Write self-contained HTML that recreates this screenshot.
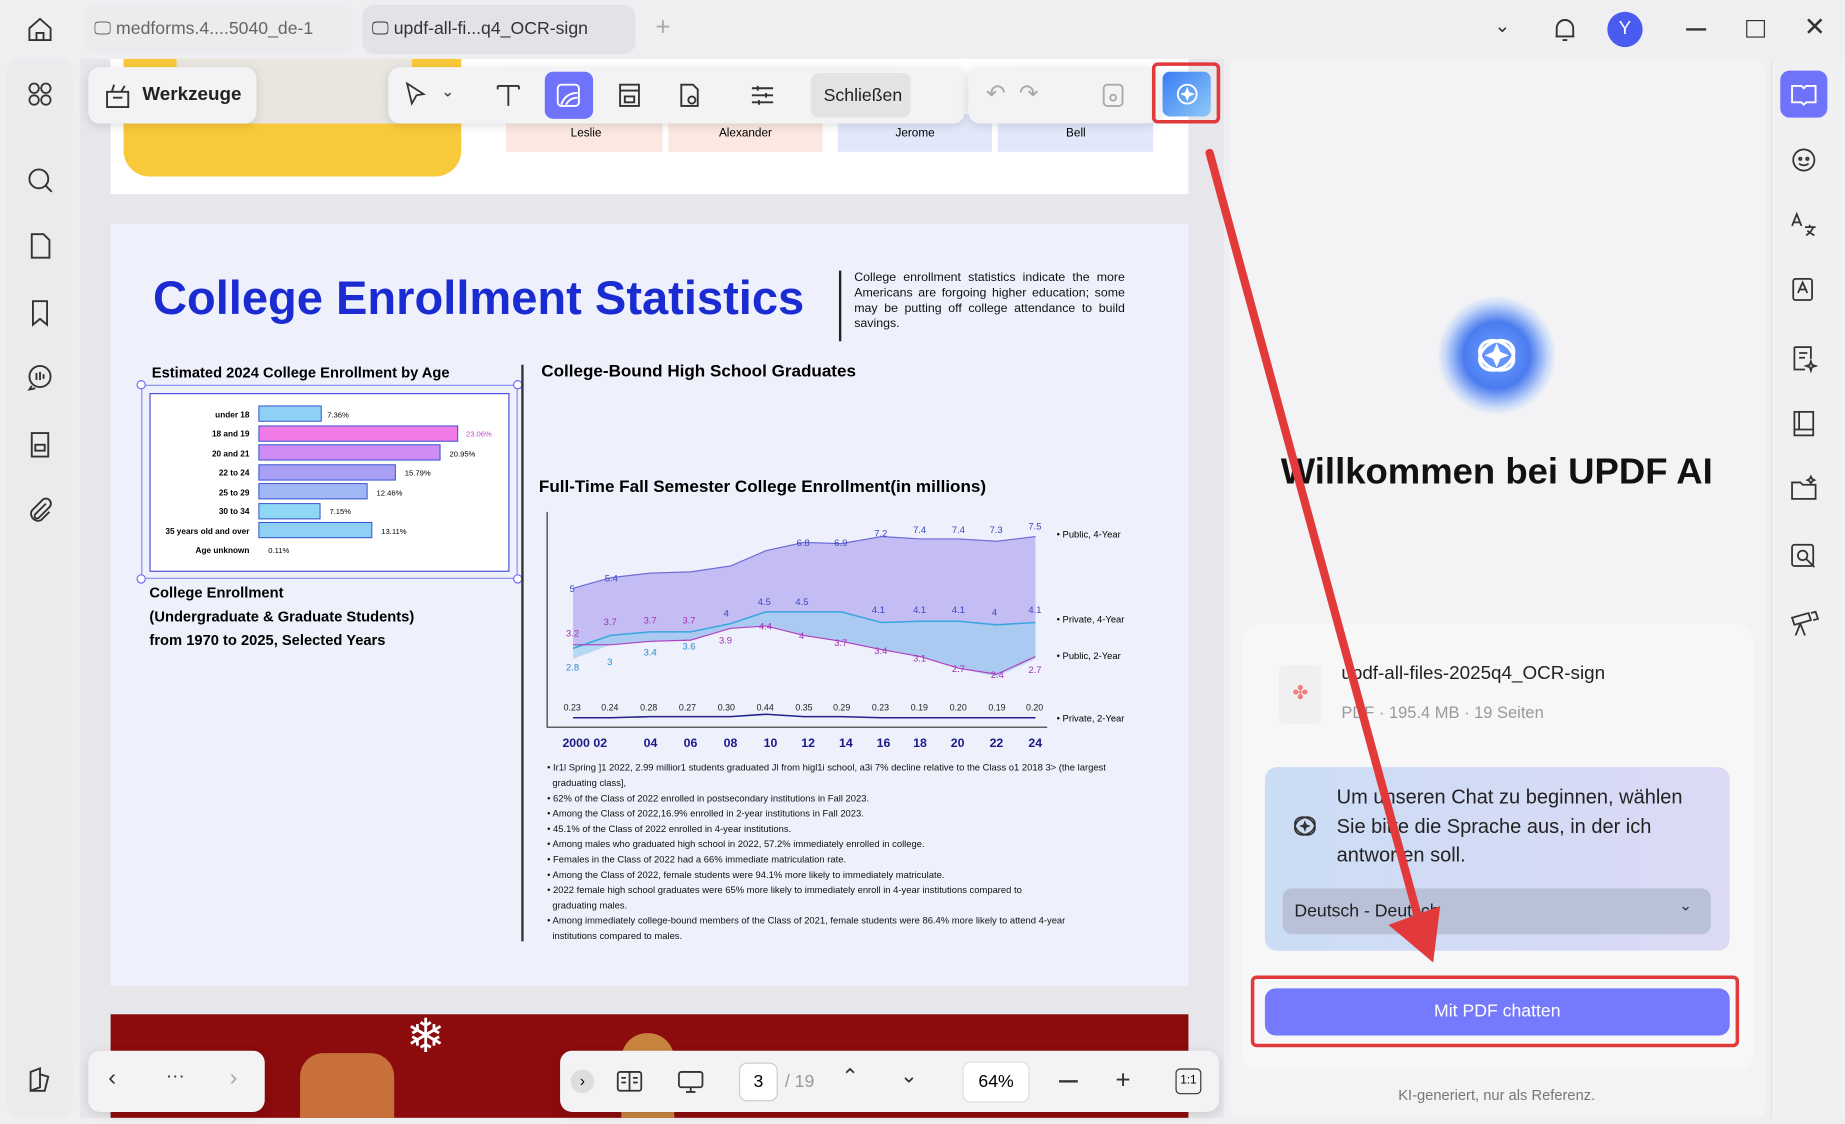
<!DOCTYPE html>
<html><head><meta charset="utf-8"><style>
*{margin:0;padding:0;box-sizing:border-box}
html,body{width:1845px;height:1124px;overflow:hidden;background:#f0f0f3;font-family:"Liberation Sans",sans-serif}
#c{position:absolute;left:0;top:0;width:1568px;height:955px;transform:scale(1.17666);transform-origin:0 0;background:#efeff2}
.a{position:absolute}
.ic{position:absolute;width:26px;height:26px;margin:-13px 0 0 -13px}
.tb{position:absolute;background:#f3f3f5;border-radius:10px;box-shadow:0 2px 8px rgba(0,0,0,.12)}
.t{position:absolute;white-space:nowrap}
</style></head><body><div id="c">
<!-- top bar -->
<svg class="ic" style="left:34px;top:25px" viewBox="0 0 26 26" fill="none" stroke="#333" stroke-width="1.6"><path d="M4 12 13 4l9 8v10H4z"/><path d="M10 22v-6h6v6"/></svg>
<div class="a" style="left:72px;top:4px;width:228px;height:42px;background:#ececef;border-radius:10px"></div>
<div class="t" style="left:80px;top:16px;font-size:15px;color:#666">🖵 medforms.4....5040_de-1</div>
<div class="a" style="left:308px;top:4px;width:232px;height:42px;background:#e3e3e7;border-radius:10px"></div>
<div class="t" style="left:316px;top:16px;font-size:15px;color:#333">🖵 updf-all-fi...q4_OCR-sign</div>
<div class="t" style="left:557px;top:10px;font-size:22px;color:#aaa">+</div>
<div class="t" style="left:1270px;top:12px;font-size:16px;color:#333">⌄</div>
<svg class="ic" style="left:1330px;top:25px" viewBox="0 0 26 26" fill="none" stroke="#333" stroke-width="1.6"><path d="M6 19V12a7 7 0 0 1 14 0v7H5h16M11 22h4"/></svg>
<div class="a" style="left:1366px;top:10px;width:30px;height:30px;border-radius:50%;background:#4a5cf0;color:#fff;font-size:16px;text-align:center;line-height:30px">Y</div>
<div class="a" style="left:1433px;top:24px;width:17px;height:1.5px;background:#333"></div>
<div class="a" style="left:1484px;top:17px;width:16px;height:15px;border:1.6px solid #333"></div>
<div class="t" style="left:1533px;top:10px;font-size:22px;color:#333">✕</div>
<!-- left sidebar -->
<div class="a" style="left:6px;top:50px;width:56px;height:900px;background:#ebebee;border-radius:10px"></div>
<svg class="ic" style="left:34px;top:80px" viewBox="0 0 26 26" fill="none" stroke="#333" stroke-width="1.5"><circle cx="8" cy="8" r="4"/><circle cx="18" cy="8" r="4"/><circle cx="8" cy="18" r="4"/><circle cx="18" cy="18" r="4"/></svg>
<svg class="ic" style="left:34px;top:153px" viewBox="0 0 26 26" fill="none" stroke="#333" stroke-width="1.6"><circle cx="12" cy="12" r="8"/><path d="m18 18 5 5"/></svg>
<svg class="ic" style="left:34px;top:209px" viewBox="0 0 26 26" fill="none" stroke="#333" stroke-width="1.6"><path d="M6 3h10l5 5v15H6z"/></svg>
<svg class="ic" style="left:34px;top:266px" viewBox="0 0 26 26" fill="none" stroke="#333" stroke-width="1.6"><path d="M7 3h12v20l-6-5-6 5z"/></svg>
<svg class="ic" style="left:34px;top:321px" viewBox="0 0 26 26" fill="none" stroke="#333" stroke-width="1.6"><circle cx="13" cy="12" r="9"/><path d="M10 9v6M13 8v7M16 10v4M6 20l-2 3 5-1"/></svg>
<svg class="ic" style="left:34px;top:378px" viewBox="0 0 26 26" fill="none" stroke="#333" stroke-width="1.6"><path d="M6 3h14v20H6z"/><rect x="9" y="13" width="8" height="5"/></svg>
<svg class="ic" style="left:34px;top:433px" viewBox="0 0 26 26" fill="none" stroke="#333" stroke-width="1.6"><path d="M18 8 9 17a2 2 0 0 0 3 3l9-9a4 4 0 0 0-6-6l-9 9a6 6 0 0 0 8 8l7-7"/></svg>
<svg class="ic" style="left:34px;top:918px" viewBox="0 0 26 26" fill="none" stroke="#333" stroke-width="1.6"><path d="M5 22V6l8-3v16zM13 8l7 2-3 12H5"/></svg>
<!-- doc area -->
<div class="a" style="left:68px;top:50px;width:972px;height:900px;background:#e7e7eb"></div>
<!-- page 1 -->
<div class="a" style="left:94px;top:50px;width:916px;height:115px;background:#fff"></div>
<div class="a" style="left:105px;top:50px;width:287px;height:100px;background:#f9c93c;border-radius:0 0 22px 22px"></div>
<div class="a" style="left:150px;top:50px;width:200px;height:55px;background:#e8e6df"></div>
<div class="a" style="left:430px;top:97px;width:133px;height:32px;background:#fbe8e0"></div>
<div class="a" style="left:568px;top:97px;width:131px;height:32px;background:#fbe8e0"></div>
<div class="a" style="left:712px;top:97px;width:131px;height:32px;background:#e1e8fa"></div>
<div class="a" style="left:848px;top:97px;width:132px;height:32px;background:#e1e8fa"></div>
<div class="t" style="left:485px;top:108px;font-size:10px">Leslie</div>
<div class="t" style="left:611px;top:108px;font-size:10px">Alexander</div>
<div class="t" style="left:761px;top:108px;font-size:10px">Jerome</div>
<div class="t" style="left:906px;top:108px;font-size:10px">Bell</div>
<!-- page 2 -->
<div class="a" style="left:94px;top:190px;width:916px;height:648px;background:#eef0fb"></div>
<div class="t" style="left:130px;top:232px;font-size:40px;font-weight:bold;color:#1a2bd1">College Enrollment Statistics</div>
<div class="a" style="left:713px;top:230px;width:2px;height:60px;background:#222"></div>
<div class="a" style="left:726px;top:230px;width:230px;font-size:10.5px;line-height:13px;text-align:justify;color:#111">College enrollment statistics indicate the more Americans are forgoing higher education; some may be putting off college attendance to build savings.</div>
<div class="t" style="left:129px;top:310px;font-size:12.5px;font-weight:bold">Estimated 2024 College Enrollment by Age</div>
<div class="a" style="left:120px;top:327px;width:320px;height:165px;border:1px solid #8a8ef5"></div>
<div class="a" style="left:127px;top:334px;width:306px;height:152px;border:1.5px solid #4a4fd8;background:#fff"></div>
<svg class="a" style="left:94px;top:300px" width="360" height="200" font-family="Liberation Sans" font-size="7" font-weight="bold">
<g text-anchor="end"><text x="118" y="55">under 18</text><text x="118" y="71">18 and 19</text><text x="118" y="88">20 and 21</text><text x="118" y="104">22 to 24</text><text x="118" y="121">25 to 29</text><text x="118" y="137">30 to 34</text><text x="118" y="154">35 years old and over</text><text x="118" y="170">Age unknown</text></g>
<rect x="126" y="45" width="53" height="13" fill="#8fd0f5" stroke="#2a4ad0" stroke-width=".8"/>
<rect x="126" y="62" width="169" height="13" fill="#f07ae6" stroke="#2a4ad0" stroke-width=".8"/>
<rect x="126" y="78" width="154" height="13" fill="#cf8cf2" stroke="#2a4ad0" stroke-width=".8"/>
<rect x="126" y="95" width="116" height="13" fill="#a9a0f5" stroke="#2a4ad0" stroke-width=".8"/>
<rect x="126" y="111" width="92" height="13" fill="#a1b6f5" stroke="#2a4ad0" stroke-width=".8"/>
<rect x="126" y="128" width="52" height="13" fill="#8fd8f5" stroke="#2a4ad0" stroke-width=".8"/>
<rect x="126" y="144" width="96" height="13" fill="#8fd0f5" stroke="#2a4ad0" stroke-width=".8"/>
<g font-weight="normal" font-size="6.5"><text x="184" y="55">7.36%</text><text x="302" y="71" fill="#d03ad0">23.06%</text><text x="288" y="88">20.95%</text><text x="250" y="104">15.79%</text><text x="226" y="121">12.46%</text><text x="186" y="137">7.15%</text><text x="230" y="154">13.11%</text><text x="134" y="170">0.11%</text></g>
<g fill="#fff" stroke="#6a6ef0"><circle cx="26" cy="27" r="3.5"/><circle cx="346" cy="27" r="3.5"/><circle cx="26" cy="192" r="3.5"/><circle cx="346" cy="192" r="3.5"/></g>
</svg>
<div class="a" style="left:127px;top:494px;font-size:12.5px;font-weight:bold;line-height:20px">College Enrollment<br>(Undergraduate &amp; Graduate Students)<br>from 1970 to 2025, Selected Years</div>
<div class="a" style="left:443px;top:310px;width:2px;height:490px;background:#333"></div>
<div class="t" style="left:460px;top:308px;font-size:14.5px;font-weight:bold">College-Bound High School Graduates</div>
<div class="t" style="left:458px;top:406px;font-size:14.5px;font-weight:bold">Full-Time Fall Semester College Enrollment(in millions)</div>
<svg class="a" style="left:0;top:0" width="1010" height="840" font-family="Liberation Sans" font-size="8">
<path d="M465 435V618H890" stroke="#333" fill="none"/>
<path d="M487 500 519 491 553 487 587 486 621 481 651 468 683 461 715 462 749 456 782 458 815 458 847 460 880 456V558L847 573 815 568 782 558 749 552 715 545 683 540 651 532 621 534 587 544 553 545 519 548 487 548Z" fill="#b9b0f2" opacity=".8"/>
<path d="M487 548 519 540 553 537 587 537 621 530 651 520 683 520 715 520 749 529 782 528 815 528 847 531 880 529V560L847 575 815 568 782 558 749 552 715 545 683 540 651 532 621 534 587 544 553 545 519 548 487 560Z" fill="#9fd0f0" opacity=".7"/>
<path d="M487 500 519 491 553 487 587 486 621 481 651 468 683 461 715 462 749 456 782 458 815 458 847 460 880 456" stroke="#6a6ad8" fill="none"/>
<path d="M487 551 519 540 553 537 587 537 621 530 651 520 683 520 715 520 749 529 782 528 815 528 847 531 880 529" stroke="#3aa6e0" fill="none" stroke-width="1.3"/>
<path d="M487 548 519 548 553 545 587 544 621 534 651 532 683 540 715 545 749 552 782 558 815 568 847 573 880 558" stroke="#b040c0" fill="none"/>
<path d="M487 610 519 610 553 609 587 609 621 609 651 607 683 609 715 609 749 610 782 610 815 610 847 610 880 610" stroke="#22228a" fill="none" stroke-width="1.3"/>
<g fill="#3a46c0"><text x="484" y="503">5</text><text x="514" y="494">5.4</text><text x="677" y="464">6.8</text><text x="709" y="464">6.9</text><text x="743" y="456">7.2</text><text x="776" y="453">7.4</text><text x="809" y="453">7.4</text><text x="841" y="453">7.3</text><text x="874" y="450">7.5</text><text x="644" y="514">4.5</text><text x="676" y="514">4.5</text><text x="741" y="521">4.1</text><text x="776" y="521">4.1</text><text x="809" y="521">4.1</text><text x="843" y="523">4</text><text x="874" y="521">4.1</text><text x="615" y="524">4</text></g>
<g fill="#a030b0"><text x="481" y="541">3.2</text><text x="513" y="531">3.7</text><text x="547" y="530">3.7</text><text x="580" y="530">3.7</text><text x="611" y="547">3.9</text><text x="645" y="535">4.4</text><text x="679" y="543">4</text><text x="709" y="549">3.7</text><text x="743" y="556">3.4</text><text x="776" y="562">3.1</text><text x="809" y="571">2.7</text><text x="842" y="576">2.4</text><text x="874" y="572">2.7</text></g>
<g fill="#2a8ad0"><text x="481" y="570">2.8</text><text x="516" y="565">3</text><text x="547" y="557">3.4</text><text x="580" y="552">3.6</text></g>
<g fill="#222" font-size="7.5"><text x="479" y="604">0.23</text><text x="511" y="604">0.24</text><text x="544" y="604">0.28</text><text x="577" y="604">0.27</text><text x="610" y="604">0.30</text><text x="643" y="604">0.44</text><text x="676" y="604">0.35</text><text x="708" y="604">0.29</text><text x="741" y="604">0.23</text><text x="774" y="604">0.19</text><text x="807" y="604">0.20</text><text x="840" y="604">0.19</text><text x="872" y="604">0.20</text></g>
<g font-size="8"><text x="898" y="457">• Public, 4-Year</text><text x="898" y="529">• Private, 4-Year</text><text x="898" y="560">• Public, 2-Year</text><text x="898" y="613">• Private, 2-Year</text></g>
<g font-size="10.5" font-weight="bold" fill="#1a1a8a"><text x="478" y="635">2000 02</text><text x="547" y="635">04</text><text x="581" y="635">06</text><text x="615" y="635">08</text><text x="649" y="635">10</text><text x="681" y="635">12</text><text x="713" y="635">14</text><text x="745" y="635">16</text><text x="776" y="635">18</text><text x="808" y="635">20</text><text x="841" y="635">22</text><text x="874" y="635">24</text></g>
</svg>
<div class="a" style="left:465px;top:646px;width:505px;font-size:8px;line-height:13px;color:#111">
• Ir1l Spring ]1 2022, 2.99 millior1 students graduated Jl from higl1i school, a3i 7% decline relative to the Class o1 2018 3&gt; (the largest<br>&nbsp;&nbsp;graduating class],<br>• 62% of the Class of 2022 enrolled in postsecondary institutions in Fall 2023.<br>• Among the Class of 2022,16.9% enrolled in 2-year institutions in Fall 2023.<br>• 45.1% of the Class of 2022 enrolled in 4-year institutions.<br>• Among males who graduated high school in 2022, 57.2% immediately enrolled in college.<br>• Females in the Class of 2022 had a 66% immediate matriculation rate.<br>• Among the Class of 2022, female students were 94.1% more likely to immediately matriculate.<br>• 2022 female high school graduates were 65% more likely to immediately enroll in 4-year institutions compared to<br>&nbsp;&nbsp;graduating males.<br>• Among immediately college-bound members of the Class of 2021, female students were 86.4% more likely to attend 4-year<br>&nbsp;&nbsp;institutions compared to males.</div>
<!-- page 3 -->
<div class="a" style="left:94px;top:862px;width:916px;height:88px;background:#8c0b0d"></div>
<div class="t" style="left:345px;top:858px;font-size:40px;color:#fff">❄</div>
<div class="a" style="left:255px;top:895px;width:80px;height:55px;background:#c8703a;border-radius:20px 20px 0 0"></div>
<div class="a" style="left:528px;top:878px;width:45px;height:72px;background:#c8843e;border-radius:22px 22px 0 0"></div>
<!-- floating toolbars -->
<div class="tb" style="left:75px;top:57px;width:143px;height:48px"></div>
<svg class="ic" style="left:100px;top:81px" viewBox="0 0 26 26" fill="none" stroke="#333" stroke-width="1.6"><path d="M4 10h18v13H4zM9 15h8M8 10l2-6M16 10l3-5"/></svg>
<div class="t" style="left:121px;top:72px;font-size:16px;font-weight:bold;color:#222">Werkzeuge</div>
<div class="tb" style="left:330px;top:57px;width:490px;height:48px"></div>
<svg class="ic" style="left:353px;top:81px" viewBox="0 0 26 26" fill="none" stroke="#333" stroke-width="1.5"><path d="M6 3l14 9-6 1-4 7z"/></svg>
<div class="t" style="left:375px;top:70px;font-size:13px;color:#333">⌄</div>
<svg class="ic" style="left:432px;top:81px" viewBox="0 0 26 26" fill="none" stroke="#333" stroke-width="1.6"><path d="M4 5h18M13 5v17M4 5v3M22 5v3"/></svg>
<div class="a" style="left:463px;top:61px;width:41px;height:40px;background:#6f73fb;border-radius:7px"></div>
<svg class="ic" style="left:483px;top:81px" viewBox="0 0 26 26" fill="none" stroke="#fff" stroke-width="1.6"><rect x="4" y="4" width="18" height="18" rx="3"/><path d="M7 21c2-6 6-10 14-10M11 21c2-4 5-6 10-6"/></svg>
<svg class="ic" style="left:535px;top:81px" viewBox="0 0 26 26" fill="none" stroke="#333" stroke-width="1.6"><path d="M5 4h16v18H5zM5 9h16M9 14h8v5H9z"/></svg>
<svg class="ic" style="left:586px;top:81px" viewBox="0 0 26 26" fill="none" stroke="#333" stroke-width="1.6"><path d="M6 4h10l4 4v14H6z"/><circle cx="15" cy="17" r="3"/></svg>
<svg class="ic" style="left:648px;top:81px" viewBox="0 0 26 26" fill="none" stroke="#333" stroke-width="1.6"><path d="M4 7h18M4 13h18M4 19h18M9 5v4M16 11v4M10 17v4"/></svg>
<div class="a" style="left:689px;top:62px;width:85px;height:38px;background:#e3e3e6;border-radius:7px"></div>
<div class="t" style="left:700px;top:73px;font-size:15px;color:#222">Schließen</div>
<div class="tb" style="left:823px;top:57px;width:162px;height:48px"></div>
<div class="t" style="left:838px;top:67px;font-size:20px;color:#aaa">↶ &nbsp;↷</div>
<svg class="ic" style="left:946px;top:81px" viewBox="0 0 26 26" fill="none" stroke="#aaa" stroke-width="1.6"><rect x="5" y="4" width="16" height="18" rx="3"/><circle cx="13" cy="15" r="2.5"/></svg>
<div class="a" style="left:979px;top:53px;width:58px;height:52px;border:3.5px solid #e23a3a;border-radius:5px"></div>
<div class="a" style="left:988px;top:61px;width:41px;height:38px;background:linear-gradient(135deg,#3a7cf5,#8ec9f7);border-radius:6px"></div>
<svg class="ic" style="left:1009px;top:80px" viewBox="0 0 26 26" fill="none" stroke="#fff" stroke-width="1.6"><circle cx="13" cy="13" r="8"/><path d="M13 9l1.2 3 3 1-3 1.2L13 17l-1.2-2.8L9 13l2.8-1z" fill="#fff"/></svg>
<!-- bottom toolbars -->
<div class="tb" style="left:75px;top:893px;width:150px;height:52px"></div>
<div class="t" style="left:92px;top:905px;font-size:20px;color:#333">‹</div>
<div class="t" style="left:141px;top:906px;font-size:16px;color:#333">···</div>
<div class="t" style="left:195px;top:905px;font-size:20px;color:#aaa">›</div>
<div class="tb" style="left:476px;top:893px;width:560px;height:52px"></div>
<div class="a" style="left:485px;top:909px;width:20px;height:20px;border-radius:50%;background:#ddd;text-align:center;font-size:13px;line-height:19px">›</div>
<svg class="ic" style="left:535px;top:919px" viewBox="0 0 26 26" fill="none" stroke="#333" stroke-width="1.5"><rect x="3" y="5" width="20" height="16" rx="2"/><path d="M13 5v16M6 10h4M6 14h4M16 10h4M16 14h4"/></svg>
<svg class="ic" style="left:587px;top:919px" viewBox="0 0 26 26" fill="none" stroke="#333" stroke-width="1.5"><rect x="3" y="5" width="20" height="13" rx="2"/><path d="M9 22h8M13 18v4"/></svg>
<div class="a" style="left:628px;top:903px;width:33px;height:33px;border:1px solid #ccc;border-radius:7px;background:#fff;text-align:center;line-height:32px;font-size:15px">3</div>
<div class="t" style="left:667px;top:911px;font-size:15px;color:#999">/ 19</div>
<div class="t" style="left:715px;top:905px;font-size:18px;color:#333">⌃</div>
<div class="t" style="left:765px;top:904px;font-size:18px;color:#333">⌄</div>
<div class="a" style="left:818px;top:902px;width:57px;height:35px;background:#fff;border-radius:7px;border:1px solid #ddd;text-align:center;line-height:34px;font-size:15px">64%</div>
<div class="a" style="left:900px;top:918px;width:16px;height:1.6px;background:#333"></div>
<div class="t" style="left:948px;top:905px;font-size:22px;color:#333">+</div>
<div class="a" style="left:999px;top:908px;width:22px;height:22px;border:1.5px solid #333;border-radius:4px;font-size:10px;text-align:center;line-height:19px">1:1</div>
<!-- right panel -->
<div class="a" style="left:1045px;top:50px;width:455px;height:900px;background:#f3f3f5;border-radius:8px"></div>
<div class="a" style="left:1222px;top:252px;width:100px;height:100px;border-radius:50%;background:radial-gradient(circle,#6fa0ff 0%,#4b7cf0 40%,rgba(120,170,255,.35) 62%,rgba(200,220,255,0) 72%)"></div>
<svg class="a" style="left:1247px;top:277px" width="50" height="50" viewBox="0 0 26 26" fill="none" stroke="#fff" stroke-width="1.4"><ellipse cx="13" cy="13" rx="8" ry="6" transform="rotate(-30 13 13)"/><ellipse cx="13" cy="13" rx="8" ry="6" transform="rotate(30 13 13)"/><path d="M13 9.5l1 2.5 2.5 1-2.5 1-1 2.5-1-2.5-2.5-1 2.5-1z" fill="#fff"/></svg>
<div class="t" style="left:1272px;top:383px;transform:translateX(-50%);font-size:31px;font-weight:bold;color:#111">Willkommen bei UPDF AI</div>
<div class="a" style="left:1055px;top:530px;width:435px;height:380px;background:#f7f7f8;border-radius:16px"></div>
<div class="a" style="left:1087px;top:565px;width:36px;height:50px;background:#f0f0f2;border-radius:5px;text-align:center;line-height:50px;color:#f08080;font-size:16px">✤</div>
<div class="t" style="left:1140px;top:564px;font-size:16px;color:#222">updf-all-files-2025q4_OCR-sign</div>
<div class="t" style="left:1140px;top:597px;font-size:14px;color:#999">PDF · 195.4 MB · 19 Seiten</div>
<div class="a" style="left:1075px;top:652px;width:395px;height:156px;background:linear-gradient(90deg,#cbdcf5,#dcdaf5);border-radius:10px"></div>
<svg class="ic" style="left:1109px;top:702px" viewBox="0 0 26 26" fill="none" stroke="#333" stroke-width="1.4"><ellipse cx="13" cy="13" rx="9" ry="7" transform="rotate(-30 13 13)"/><ellipse cx="13" cy="13" rx="9" ry="7" transform="rotate(30 13 13)"/><path d="M13 10l.8 2.2 2.2.8-2.2.8L13 16l-.8-2.2-2.2-.8 2.2-.8z" fill="#333"/></svg>
<div class="a" style="left:1136px;top:666px;width:320px;font-size:17px;line-height:24.5px;color:#222">Um unseren Chat zu beginnen, wählen Sie bitte die Sprache aus, in der ich antworten soll.</div>
<div class="a" style="left:1090px;top:755px;width:364px;height:39px;background:#b8c1d8;border-radius:8px"></div>
<div class="t" style="left:1100px;top:766px;font-size:15px;color:#222">Deutsch - Deutsch</div>
<div class="t" style="left:1427px;top:762px;font-size:13px;color:#333">⌄</div>
<div class="a" style="left:1063px;top:829px;width:415px;height:61px;border:3.5px solid #e23a3a;border-radius:5px"></div>
<div class="a" style="left:1075px;top:840px;width:395px;height:40px;background:#7579fc;border-radius:9px;color:#fff;font-size:15px;text-align:center;line-height:40px">Mit PDF chatten</div>
<div class="t" style="left:1272px;top:924px;transform:translateX(-50%);font-size:12.5px;color:#777">KI-generiert, nur als Referenz.</div>
<!-- right icon bar -->
<div class="a" style="left:1505px;top:50px;width:63px;height:900px;background:#f0f0f3;border-left:1px solid #e2e2e6"></div>
<div class="a" style="left:1513px;top:60px;width:40px;height:40px;background:#6f73fb;border-radius:8px"></div>
<svg class="ic" style="left:1533px;top:80px" viewBox="0 0 26 26" fill="none" stroke="#fff" stroke-width="1.6"><path d="M3 6h8l2 2 2-2h8v14h-8l-2 2-2-2H3z"/></svg>
<svg class="ic" style="left:1533px;top:136px" viewBox="0 0 26 26" fill="none" stroke="#333" stroke-width="1.5"><circle cx="13" cy="13" r="9"/><circle cx="10" cy="12" r="1"/><circle cx="16" cy="12" r="1"/><path d="M9 16c2 2 6 2 8 0"/></svg>
<svg class="ic" style="left:1533px;top:191px" viewBox="0 0 26 26" fill="none" stroke="#333" stroke-width="1.5"><path d="M3 14l4-10 4 10M4.5 11h5M14 15h9M18 13v2M15 22c3-2 5-4 6-7M16 18c2 2 4 3 6 4"/></svg>
<svg class="ic" style="left:1533px;top:247px" viewBox="0 0 26 26" fill="none" stroke="#333" stroke-width="1.5"><rect x="4" y="3" width="16" height="18" rx="2"/><path d="M8 15l4-9 4 9M9.5 12h5"/></svg>
<svg class="ic" style="left:1533px;top:305px" viewBox="0 0 26 26" fill="none" stroke="#333" stroke-width="1.5"><path d="M5 3h14v10M5 3v19h9M9 8h7M9 12h5"/><path d="M19 15l1 3 3 1-3 1-1 3-1-3-3-1 3-1z"/></svg>
<svg class="ic" style="left:1533px;top:360px" viewBox="0 0 26 26" fill="none" stroke="#333" stroke-width="1.5"><path d="M5 3h16v20H5zM5 18h16M9 3v15"/></svg>
<svg class="ic" style="left:1533px;top:416px" viewBox="0 0 26 26" fill="none" stroke="#333" stroke-width="1.5"><path d="M3 7h7l2 2h11v12H3z"/><path d="M19 2l1 2 2 1-2 1-1 2-1-2-2-1 2-1z"/></svg>
<svg class="ic" style="left:1533px;top:473px" viewBox="0 0 26 26" fill="none" stroke="#333" stroke-width="1.5"><rect x="3" y="3" width="18" height="18" rx="2"/><circle cx="12" cy="12" r="4"/><path d="m15 15 7 7"/></svg>
<svg class="ic" style="left:1533px;top:530px" viewBox="0 0 26 26" fill="none" stroke="#333" stroke-width="1.5"><path d="M3 8l14-4 2 6-14 4zM19 4l4-1 2 6-4 1M10 13l-4 10M10 13l4 10"/></svg>
<!-- red arrow -->
<svg class="a" style="left:0;top:0" width="1568" height="955"><path d="M1028 130 1208 790" stroke="#e23a3a" stroke-width="7" stroke-linecap="round"/><path d="M1180 786 1218 818 1224 770z" fill="#e23a3a"/></svg>
</div></body></html>
